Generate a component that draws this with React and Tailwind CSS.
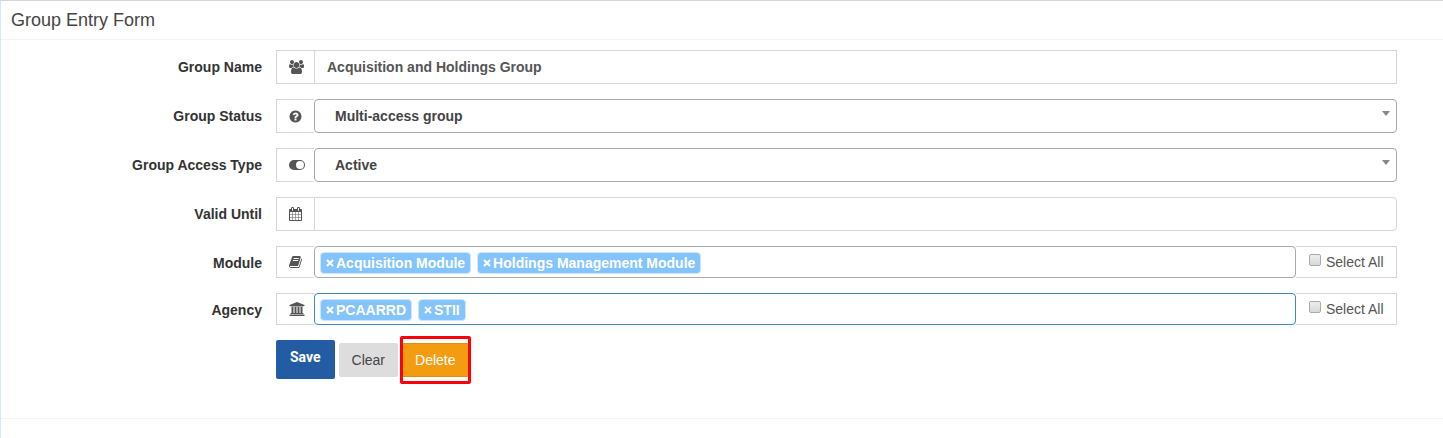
import React from "react";

const ICONS = {
  users: {
    box: "64 0 2048 1792",
    size: "w-4 h-3.5",
    d: "M657 896q-162 5-265 128h-134q-82 0-138-40.5t-56-118.5q0-353 124-353 6 0 43.5 21t97.5 42.5 119 21.5q67 0 133-23-5 37-5 66 0 143 83 256zm1071 637q0 120-73 189.5t-194 69.5h-874q-121 0-194-69.5t-73-189.5q0-53 3.5-103.5t14-109 26.5-108.5 43-97.5 62-81 85.5-53.5 111.5-20q10 0 43 21.5t73 48 107 48 135 21.5 135-21.5 107-48 73-48 43-21.5q61 0 111.5 20t85.5 53.5 62 81 43 97.5 26.5 108.5 14 109 3.5 103.5zm-1024-1277q0 106-75 181t-181 75-181-75-75-181 75-181 181-75 181 75 75 181zm704 384q0 159-112.5 271.5t-271.5 112.5-271.5-112.5-112.5-271.5 112.5-271.5 271.5-112.5 271.5 112.5 112.5 271.5zm576 225q0 78-56 118.5t-138 40.5h-134q-103-123-265-128 93-113 93-256 0-29-5-66 66 23 133 23 59 0 119-21.5t97.5-42.5 43.5-21q124 0 124 353zm-128-609q0 106-75 181t-181 75-181-75-75-181 75-181 181-75 181 75 75 181z",
  },
  question: {
    box: "64 64 1664 1664",
    size: "w-[13px] h-[13px]",
    d: "M1024 1376v-192q0-14-9-23t-23-9h-192q-14 0-23 9t-9 23v192q0 14 9 23t23 9h192q14 0 23-9t9-23zm256-672q0-88-55.5-163t-138.5-116-170-41q-243 0-371 213-15 24 8 42l132 100q7 6 19 6 16 0 25-12 53-68 86-92 34-24 86-24 48 0 85.5 26t37.5 59q0 38-20 61t-68 45q-63 28-115.5 86.5t-52.5 125.5v36q0 14 9 23t23 9h192q14 0 23-9t9-23q0-19 21.5-49.5t54.5-49.5q32-18 49-28.5t46-35 44.5-48 28-60.5 12.5-81zm384 192q0 209-103 385.5t-279.5 279.5-385.5 103-385.5-103-279.5-279.5-103-385.5 103-385.5 279.5-279.5 385.5-103 385.5 103 279.5 279.5 103 385.5z",
  },
  toggle: {
    box: "0 0 2048 1792",
    size: "w-4 h-3.5",
    d: "M0 896a640 640 0 0 1 640-640h768a640 640 0 0 1 0 1280h-768a640 640 0 0 1-640-640zM1408 1408a512 512 0 0 0 0-1024 512 512 0 0 0 0 1024z",
  },
  calendar: {
    box: "64 0 1664 1792",
    size: "w-[13px] h-3.5",
    d: "M192 1664h288v-288h-288v288zm352 0h320v-288h-320v288zm-352-352h288v-320h-288v320zm352 0h320v-320h-320v320zm-352-384h288v-288h-288v288zm736 736h320v-288h-320v288zm-384-736h320v-288h-320v288zm768 736h288v-288h-288v288zm-384-352h320v-320h-320v320zm-352-864v-288q0-13-9.5-22.5t-22.5-9.5h-64q-13 0-22.5 9.5t-9.5 22.5v288q0 13 9.5 22.5t22.5 9.5h64q13 0 22.5-9.5t9.5-22.5zm736 864h288v-320h-288v320zm-384-384h320v-288h-320v288zm384 0h288v-288h-288v288zm32-480v-288q0-13-9.5-22.5t-22.5-9.5h-64q-13 0-22.5 9.5t-9.5 22.5v288q0 13 9.5 22.5t22.5 9.5h64q13 0 22.5-9.5t9.5-22.5zm384-64v1280q0 52-38 90t-90 38h-1408q-52 0-90-38t-38-90v-1280q0-52 38-90t90-38h128v-96q0-66 47-113t113-47h64q66 0 113 47t47 113v96h384v-96q0-66 47-113t113-47h64q66 0 113 47t47 113v96h128q52 0 90 38t38 90z",
  },
  book: {
    box: "64 0 1664 1792",
    size: "w-[13px] h-3.5",
    d: "M1703 478q40 57 18 129l-275 906q-19 64-76.5 107.5t-122.5 43.5h-923q-77 0-148.5-53.5t-99.5-131.5q-24-67-2-127 0-4 3-27t4-37q1-8-3-21.5t-3-19.5q2-11 8-21t16.5-23.5 16.5-23.5q23-38 45-91.5t30-91.5q3-10 .5-30t-.5-28q3-11 17-28t17-23q21-36 42-92t25-90q1-9-2.5-32t.5-28q4-13 22-30.5t22-22.5q19-26 42.5-84.5t27.5-96.5q1-8-3-25.5t-2-26.5q2-8 9-18t18-23 17-21q8-12 16.5-30.5t15-35 16-36 19.5-32 26.5-23.5 36-11.5 47.5 5.5l-1 3q38-9 51-9h761q74 0 114 56t18 130l-274 906q-36 119-71.5 153.5t-128.5 34.5h-869q-27 0-38 15-11 16-1 43 24 70 144 70h923q29 0 56-15.5t35-41.5l300-987q7-22 5-57 38 15 59 43zm-1064 2q-4 13 2 22.5t20 9.5h608q13 0 25.5-9.5t16.5-22.5l21-64q4-13-2-22.5t-20-9.5h-608q-13 0-25.5 9.5t-16.5 22.5zm-83 256q-4 13 2 22.5t20 9.5h608q13 0 25.5-9.5t16.5-22.5l21-64q4-13-2-22.5t-20-9.5h-608q-13 0-25.5 9.5t-16.5 22.5z",
  },
  university: {
    box: "0 0 1920 1792",
    size: "w-4 h-3.5",
    d: "M960 0l960 384v128h-128q0 26-20.5 45t-48.5 19h-1526q-28 0-48.5-19t-20.5-45h-128v-128zm-704 640h256v768h128v-768h256v768h128v-768h256v768h128v-768h256v768h59q28 0 48.5 19t20.5 45v64h-1664v-64q0-26 20.5-45t48.5-19h59v-768zm1595 960q28 0 48.5 19t20.5 45v128h-1920v-128q0-26 20.5-45t48.5-19h1782z",
  },
};

function Icon({ name }) {
  const { box, size, d } = ICONS[name];
  return (
    <svg viewBox={box} className={`${size} shrink-0 fill-current`} aria-hidden="true">
      <path fillRule="evenodd" d={d} />
    </svg>
  );
}

function Row({ id, label, icon, children }) {
  return (
    <div className="flex items-stretch">
      <label htmlFor={id} className="mr-3.5 w-[251px] shrink-0 pt-[7px] text-right font-bold text-[#333]">
        {label}
      </label>
      <div className="flex min-w-0 flex-1">
        <span className="flex w-[38px] shrink-0 items-center border border-r-0 border-[#d2d6de] pl-3">
          <Icon name={icon} />
        </span>
        {children}
      </div>
    </div>
  );
}

function Select({ id, value }) {
  return (
    <div className="relative min-w-0 flex-1">
      <select
        id={id}
        defaultValue={value}
        className="block h-[34px] w-full appearance-none rounded-sm border border-[#aaa] bg-white px-5 font-bold text-[#444] outline-none"
      >
        <option>{value}</option>
      </select>
      <svg viewBox="0 0 8 5" className="pointer-events-none absolute top-3 right-[7px] h-[5px] w-2 fill-[#888]" aria-hidden="true">
        <path d="M0 0h8L4 5z" />
      </svg>
    </div>
  );
}

function TagField({ id, tags, focused }) {
  return (
    <>
      <div
        className={`flex h-8 min-w-0 flex-1 items-end gap-1.5 rounded-sm border px-[5px] pb-[3px] ${
          focused ? "border-[#3c8dbc]" : "border-[#aaa]"
        }`}
      >
        {tags.map((tag) => (
          <span
            key={tag}
            className="flex h-[22px] shrink-0 items-center rounded-sm border border-[#cfe7fd] bg-[#84c4fd] px-[5px] font-bold text-white"
          >
            <button type="button" aria-label={`Remove ${tag}`} className="mr-0.5 flex">
              <svg viewBox="0 0 8 8" className="h-2 w-2 stroke-white stroke-2" aria-hidden="true">
                <path d="M1 1l6 6M7 1L1 7" />
              </svg>
            </button>
            {tag}
          </span>
        ))}
        <input id={id} type="text" className="min-w-0 flex-1 bg-transparent outline-none" />
      </div>
      <label className="flex w-[101px] shrink-0 items-center border border-l-0 border-[#d2d6de] pl-[13px]">
        <input
          type="checkbox"
          className="mr-[5px] mb-1 h-3 w-3 shrink-0 appearance-none rounded-xs border border-[#aaa] bg-linear-to-b from-[#eee] to-[#d8d8d8]"
        />
        Select All
      </label>
    </>
  );
}

export default function App() {
  return (
    <main className="border-t border-l border-t-[#d2d6de] border-l-[#d2e9ff] bg-white font-['Liberation_Sans',Arial,sans-serif] text-sm leading-5 text-[#555]">
      <header className="border-b border-[#f4f4f4] px-2.5 py-[9px]">
        <h1 className="text-lg leading-5 text-[#444]">Group Entry Form</h1>
      </header>
      <form className="pt-2.5 pr-[46px] pl-2.5" onSubmit={(e) => e.preventDefault()}>
        <div className="flex flex-col gap-[15px]">
          <Row id="name" label="Group Name" icon="users">
            <input
              id="name"
              type="text"
              defaultValue="Acquisition and Holdings Group"
              className="h-[34px] min-w-0 flex-1 border border-[#d2d6de] px-3 font-bold text-[#555] outline-none"
            />
          </Row>
          <Row id="status" label="Group Status" icon="question">
            <Select id="status" value="Multi-access group" />
          </Row>
          <Row id="access" label="Group Access Type" icon="toggle">
            <Select id="access" value="Active" />
          </Row>
          <Row id="valid" label="Valid Until" icon="calendar">
            <input
              id="valid"
              type="text"
              className="h-[34px] min-w-0 flex-1 rounded-r-sm border border-[#d2d6de] px-3 outline-none"
            />
          </Row>
          <Row id="module" label="Module" icon="book">
            <TagField id="module" tags={["Acquisition Module", "Holdings Management Module"]} />
          </Row>
          <Row id="agency" label="Agency" icon="university">
            <TagField id="agency" tags={["PCAARRD", "STII"]} focused />
          </Row>
        </div>
        <div className="mt-[15px] flex items-center gap-1 pl-[265px]">
          <button type="submit" className="h-[39px] rounded-xs bg-[#245ca4] px-3.5 pb-1.5 font-['Roboto',sans-serif] font-bold text-white">
            Save
          </button>
          <button type="button" className="h-[34px] rounded-xs border border-[#ddd] bg-[#ddd] px-3 text-[#444]">
            Clear
          </button>
          <div className="relative">
            <button type="button" className="block h-[34px] rounded-xs border border-[#e08e0b] bg-[#f39c12] px-3 text-white">
              Delete
            </button>
            <span className="pointer-events-none absolute -inset-x-0.5 -inset-y-[7px] rounded-xs border-3 border-[#fb0207]" />
          </div>
        </div>
      </form>
      <footer className="mt-[39px] h-5 border-t border-[#f4f4f4]" />
    </main>
  );
}
